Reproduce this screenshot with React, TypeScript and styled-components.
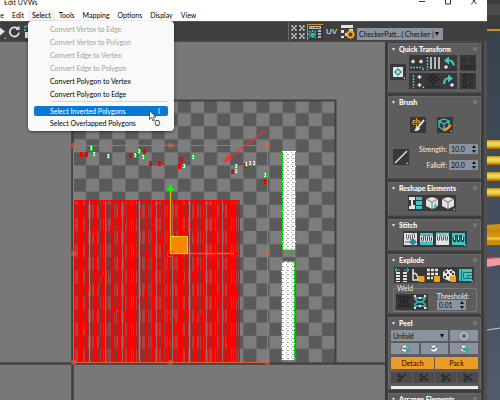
import React from "react";
import styled, { createGlobalStyle, css } from "styled-components";

const Global = createGlobalStyle`
  * { box-sizing: border-box; }
  html, body { margin: 0; overflow: hidden; background: #3f4753; }
  body { font-family: Lato, "Open Sans", sans-serif; font-size: 7px; line-height: 10px; color: #f0f0f0; }
  button, input, select { font: inherit; color: inherit; margin: 0; padding: 0; border: 0; border-radius: 0; }
  svg { display: block; }
`;

const Screen = styled.div`
  display: grid;
  grid-template-columns: minmax(0, 1fr) 13px;
  height: 100vh;
  overflow: hidden;
`;
const Window = styled.div`
  position: relative;
  display: flex;
  flex-direction: column;
  min-width: 0;
  min-height: 0;
  background: #444;
`;
const TitleBar = styled.header`
  display: flex;
  justify-content: space-between;
  height: 10px;
  flex: none;
  padding-left: 4px;
  background: #fff;
  color: #111;
  line-height: 4px;
`;
const WindowButtons = styled.div`
  display: flex;
  gap: 6px;
  padding-right: 3px;
`;
const WindowButton = styled.button`
  width: 20px;
  height: 6px;
  background: none;
  display: grid;
  justify-content: center;
`;
const MenuBar = styled.nav`
  display: flex;
  height: 11px;
  flex: none;
  background: #fff;
  overflow: hidden;
`;
const MenuTitles = styled.div`
  display: flex;
  margin-left: -11px;
`;
const MenuTitle = styled.button<{ $open?: boolean }>`
  padding: 0 4px;
  height: 11px;
  line-height: 11px;
  color: #000;
  background: ${(p) => (p.$open ? "#f1f1f1" : "transparent")};
`;
const Toolbar = styled.div`
  display: flex;
  align-items: center;
  justify-content: space-between;
  height: 21px;
  flex: none;
  background: #3f3f3f;
  border-top: 1px solid #555;
  border-bottom: 1px solid #4c4c4c;
`;
const Tools = styled.div`
  display: flex;
  align-items: center;
`;
const LeftTools = styled(Tools)`
  margin-left: -9px;
`;
const RightTools = styled(Tools)`
  height: 19px;
  padding: 0 44px 0 1px;
  gap: 1px;
  border-left: 1px solid #666;
`;
const IconButton = styled.button<{ $plain?: boolean; $active?: boolean }>`
  width: 16px;
  height: 16px;
  flex: none;
  background: ${(p) => (p.$plain ? "transparent" : "#383838")};
  ${(p) => p.$active && css`box-shadow: inset 1px 1px #e08a1c;`}
`;
const TextTool = styled.button`
  width: 15px;
  background: none;
  color: #eee;
  font-family: "Liberation Sans", sans-serif;
  font-size: 8px;
`;
const Picker = styled.div<{ $top?: boolean }>`
  position: relative;
  color: #0c1016;
  background: #8a93a0;
  height: ${(p) => (p.$top ? "12px" : "11px")};
  width: ${(p) => (p.$top ? "86px" : "auto")};
  margin-top: ${(p) => (p.$top ? "4px" : "0")};
  select {
    appearance: none;
    display: block;
    width: 100%;
    height: 100%;
    padding: 0 0 0 2px;
    background: transparent;
  }
  svg {
    position: absolute;
    right: 4px;
    top: 4px;
    pointer-events: none;
  }
`;
const Body = styled.div`
  flex: 1;
  min-height: 0;
  display: grid;
  grid-template-columns: minmax(0, 1fr) 102px;
`;
const Viewport = styled.main`
  min-width: 0;
  min-height: 0;
  overflow: hidden;
  background: #787878;
`;
const Side = styled.aside`
  display: flex;
  flex-direction: column;
  gap: 3px;
  min-height: 0;
  overflow: hidden;
  padding: 1px 3px 0 2px;
  background: #3e3e3e;
  border-left: 1px solid #363636;
  border-right: 3px solid #505050;
`;
const Rollout = styled.section`
  flex: none;
  background: #5d5d5d;
  border: 1px solid #696969;
  border-bottom-color: #505050;
`;
const RolloutTitle = styled.h2`
  display: flex;
  align-items: center;
  height: 10px;
  margin: 0;
  padding: 0 3px;
  gap: 4px;
  font-size: 7px;
  line-height: 10px;
  font-weight: 900;
  white-space: nowrap;
  color: #fff;
  &::after {
    content: "";
    width: 4px;
    height: 4px;
    margin-left: auto;
    background: #747474;
  }
`;
const Row = styled.div<{ $gap?: number; $pad?: string; $center?: boolean }>`
  display: flex;
  align-items: center;
  justify-content: ${(p) => (p.$center ? "center" : "flex-start")};
  gap: ${(p) => p.$gap ?? 0}px;
  padding: ${(p) => p.$pad ?? "0"};
`;
const TransformGrid = styled.div`
  display: grid;
  grid-template-columns: repeat(3, 16px);
  gap: 2px 0;
`;
const Stack = styled.div`
  display: grid;
  gap: 2px;
`;
const Fields = styled.div`
  display: grid;
  gap: 6px;
  margin-left: auto;
`;
const Field = styled.label`
  display: flex;
  align-items: center;
  justify-content: flex-end;
  gap: 2px;
  white-space: nowrap;
`;
const Spinner = styled.span`
  display: flex;
  align-items: center;
  width: 29px;
  height: 10px;
  padding: 0 2px;
  background: #8a93a0;
  color: #0c1016;
  input {
    width: 21px;
    height: 10px;
    background: transparent;
    outline: 0;
  }
`;
const Weld = styled.fieldset`
  display: flex;
  justify-content: space-between;
  min-width: 0;
  height: 28px;
  margin: 0 3px 1px 4px;
  padding: 0 7px 0 2px;
  border: 1px solid #777;
  legend {
    padding: 0 1px;
    height: 8px;
    line-height: 8px;
  }
`;
const Threshold = styled.label`
  display: grid;
  align-content: start;
  line-height: 8px;
`;
const PeelGrid = styled.div`
  display: grid;
  grid-template-columns: repeat(3, 1fr);
  gap: 2px;
  padding: 2px 2px 3px;
  ${Picker} { grid-column: span 2; }
`;
const PeelButton = styled.button`
  display: grid;
  place-items: center;
  height: 11px;
  background: #8a93a0;
`;
const Split = styled.div<{ $cols: number }>`
  display: grid;
  grid-template-columns: repeat(${(p) => p.$cols}, 1fr);
  gap: 1px;
  padding: 0 2px 3px;
`;
const Action = styled.button`
  height: 12px;
  background: #ed9b22;
  color: #100c04;
`;
const Disabled = styled.button`
  display: grid;
  place-items: center;
  height: 11px;
  background: #4b4b4b;
`;
const Progress = styled.div`
  height: 3px;
  margin: 0 2px;
  background: #eee;
`;
const Popup = styled.div`
  position: absolute;
  left: 28px;
  top: 21px;
  width: 146px;
  padding: 1px 6px 2px;
  border-radius: 4px;
  background: #f9f9f9;
  box-shadow: 0 1px 3px #0008;
`;
const MenuItem = styled.button<{ $hot?: boolean }>`
  display: flex;
  justify-content: space-between;
  align-items: center;
  width: 100%;
  height: ${(p) => (p.$hot ? "10px" : "13px")};
  padding: 0 8px 0 16px;
  border-radius: 2px;
  text-align: left;
  white-space: nowrap;
  background: ${(p) => (p.$hot ? "#0a78d4" : "transparent")};
  color: ${(p) => (p.$hot ? "#fff" : "#000")};
  &:disabled { color: #a0a0a0; }
`;
const Divider = styled.hr`
  height: 1px;
  margin: 1px 0 4px 17px;
  border: 0;
  background: #d8d8d8;
`;
const Pointer = styled.svg`
  position: absolute;
  left: 149px;
  top: 110px;
`;

const W = "#e4e4e4";
const T = "#3fc5c5";
const O = "#efa31f";
const D = "#252525";

const Svg = ({ children, corner }: { children: React.ReactNode; corner?: boolean }) => (
  <svg width="16" height="16" viewBox="0 0 16 16" fill="none">
    {children}
    {corner && <path d="M15 13v2h-2z" fill="#bbb" />}
  </svg>
);
const Arrow = () => (
  <svg width="4" height="4" viewBox="0 0 4 4"><path d="M0 0h4L2 4z" fill="#111" /></svg>
);
const Chevron = () => (
  <svg width="3" height="3" viewBox="0 0 3 3"><path d="M0 0h3L1.5 3z" fill="#ddd" /></svg>
);

const icons: Record<string, React.ReactNode> = {
  Move: <><path d="M4 7.500h6" stroke={W} strokeWidth="1.600" /><path d="M9 3.500l5 4-5 4z" fill={W} /><path d="M15 13v2h-2z" fill="#bbb" /></>,
  Rotate: <><path d="M10.500 4.500A4.600 4.600 0 1 0 12 8.500" stroke={W} strokeWidth="1.7" /><path d="M8.500 6h4V1.500z" fill={W} /></>,
  Scale: <><path d="M2 7V2h10v10" stroke={T} strokeWidth="1.500" strokeDasharray="2 1" /><path d="M2 8h6v6H2z" fill={W} /></>,
  "Checker pattern": <path d="M1.500 1.500l5 5m0-5l-5 5M9.500 1.500l5 5m0-5l-5 5M1.500 9.500l5 5m0-5l-5 5M9.500 9.500l5 5m0-5l-5 5" stroke={W} strokeWidth="1.600" strokeDasharray="1.8 .8" />,
  "Show map": <><path d="M2 2h12v3H2zM11 6h3v2h-3zm0 3h3v2h-3zm0 3h3v2h-3z" fill="#b8b8b8" /><path d="M3 3.500h1m1 0h1m1 0h6" stroke="#555" /><path d="M2 7l7 7m0-7l-7 7M5.500 6v9M1 10.500h9" stroke={T} strokeWidth="1.5" strokeDasharray="2 1" /></>,
  "Map options": <><path d="M1 1h12v3H1zM1 6h3v3H1zm4 3h3v3H5zM1 12h3v2H1zm8-7h4v2H9z" fill={W} /><circle cx="10.5" cy="10.5" r="3" stroke={O} strokeWidth="2" /><path d="M10.500 6v2m0 5v2M6 10.500h2m5 0h2" stroke={O} /></>,
  Pivot: <><path d="M3 3h10v10H3z" fill={W} /><path d="M8 4l4 4-4 4-4-4z" fill="#1d8f92" /><path d="M8 6v4M6 8h4" stroke="#fff" /></>,
  "Align horizontal": <><path d="M4 4.500v4M2 6.500h4M12 4.500v4m-2-2h4" stroke={W} strokeWidth="1.3" /><path d="M1 12.500h13" stroke={T} strokeDasharray="2 1" strokeWidth="1.300" /></>,
  "Space lines": <><path d="M2.500 2v13" stroke={T} strokeWidth="1.600" strokeDasharray="2 1" /><path d="M6 2v12m4-12v12m4-12v12" stroke={W} strokeWidth="1.5" /></>,
  "Rotate left": <><path d="M6 5.500c4-1 6 1 7 5" stroke={T} strokeWidth="2.2" /><path d="M8 1.500v8l-5-4z" fill={T} /><path d="M5 10v4M3 12h4" stroke={W} strokeWidth="1.3" /></>,
  "Align vertical": <><path d="M4.500 2v13" stroke={T} strokeDasharray="2 1" strokeWidth="1.5" /><path d="M10.500 2v4m-2-2h4M10.500 10v4m-2-2h4" stroke={W} strokeWidth="1.3" /></>,
  Relax: <><path d="M8 1l5 5-5 5-5-5zM5.500 3.500l5 5m0-5l-5 5" stroke={D} strokeWidth="1.3" /><path d="M1 13.500h14" stroke={D} strokeWidth="2" strokeDasharray="2 1" /></>,
  "Rotate right": <><path d="M3 11c0-4 2-6 6-6" stroke={T} strokeWidth="2.2" /><path d="M7 1.500v8l5-4z" fill={T} /><path d="M11 10v4m-2-2h4" stroke={W} strokeWidth="1.3" /></>,
  "Distribute row": <g stroke={D}><circle cx="4" cy="5" r="2" /><circle cx="12" cy="5" r="2" /><path d="M1.500 10.500h3v3h-3zm5 0h3v3h-3zm5 0h3v3h-3z" /></g>,
  "Distribute column": <g stroke={D}><circle cx="11" cy="4" r="2" /><circle cx="11" cy="12" r="2" /><path d="M3.500 1.500h3v3h-3zm0 5h3v3h-3zm0 5h3v3h-3z" /></g>,
  Paint: <><path d="M2 5.500h8M6.500 1v9M3.500 3.500h6v4h-6z" stroke={O} strokeWidth="1.2" strokeDasharray="2 1" /><path d="M14 3L8.500 10" stroke={W} strokeWidth="2" /><path d="M7 9l3 2c-1 3-3 3-6 3 2-1 1-4 3-5z" fill={W} /></>,
  "Relax brush": <><path d="M7 2l5 2v6l-5 3-5-3V4zM2 4l5 3 5-3M7 7v6" stroke={T} strokeWidth="1.3" /><path d="M14 8l-4 4" stroke={O} strokeWidth="2.200" /><path d="M9 10l2 2c-1 2-3 2-5 2z" fill={O} /></>,
  Falloff: <path d="M2 14L14 2" stroke={W} strokeWidth="1.4" />,
  Straighten: <><path d="M1 2h6v3H5v5h2v4H1v-3h2V5H1z" fill={W} /><path d="M8 2h6v3H8zm0 4h6v4H8zm0 5h6v3H8z" fill={T} /></>,
  "Relax mesh": <><path d="M8 2l6 2v7l-6 3-6-3V4z" fill={W} /><path d="M2 4l6 3 6-3M8 7v7" stroke="#777" /><path d="M12 7l-3 5h2l-1 3 4-5h-2z" fill={T} /></>,
  "Relax custom": <><path d="M8 2l6 2v7l-6 3-6-3V4z" fill={W} /><path d="M2 4l6 3 6-3M8 7v7" stroke="#777" /></>,
  "Stitch custom": <><path d="M1 2h13v12H1z" fill={W} /><path d="M3.500 3v4c0 2 2 2 2 0V5c0-2 2-2 2 0v3c0 2 2 1 2 0V4c0-2 2-2 2 0v3M2 11h6" stroke="#555" strokeWidth=".9" /><path d="M10 7l4 4-4 4-4-4z" fill="#268e91" /></>,
  "Stitch source": <><path d="M1 2h13v12H1z" fill={W} /><path d="M1 2h13v3H1zM1 11h13v3H1z" fill={T} /><path d="M2.500 6v3c0 2 2 2 2 0V6c0-2 2-2 2 0v3c0 2 2 2 2 0V6c0-2 2-2 2 0v3c0 2 2 2 2 0V6" stroke="#444" /></>,
  "Stitch average": <><path d="M1 2h13v12H1z" fill={W} /><path d="M1 3h13" stroke={T} strokeWidth="3" strokeDasharray="2 1" /><path d="M2.500 5v3c0 2 2 2 2 0V6c0-2 2-2 2 0v2c0 2 2 2 2 0V6c0-2 2-2 2 0v2c0 2 2 2 2 0V5" stroke="#555" /></>,
  "Stitch target": <><path d="M1 2h13v12H1z" fill={T} /><path d="M2.500 6v3c0 2 2 2 2 0V6c0-2 2-2 2 0v3c0 2 2 2 2 0V6c0-2 2-2 2 0v3c0 2 2 2 2 0V6" stroke="#1d4648" strokeWidth="1.600" /><path d="M3.500 6v3m4-3v3m4-3v3" stroke={W} /></>,
  Break: <><path d="M4 5v10m7-10v10" stroke={W} strokeWidth="4" strokeDasharray="2 1" /><path d="M1 3h5m9 0h-5M3 1L1 3l2 2m10-4l2 2-2 2" stroke={T} /></>,
  "Flatten angle": <><path d="M3 2v11h6M3 6c4 0 5 3 5 7" stroke={W} strokeWidth="1.5" /><path d="M8.500 9h6v6h-6z" fill={O} /></>,
  "Flatten groups": <><path d="M1 3h12M1 7h12M1 11h6" stroke={W} strokeWidth="2.600" strokeDasharray="3 1" /><path d="M8 9h6v6H8z" fill={O} /></>,
  "Flatten material": <><path d="M7 1l6 4v6l-6 3-6-3V5z" fill={W} /><path d="M3 5h2m3 0h2M5 8h2M2 10h2M6 2h2m2 5h2" stroke="#333" strokeWidth="2" /><path d="M8 9h6v6H8z" fill={O} /></>,
  "Flatten custom": <><path d="M1 2h13v12H1z" fill={T} /><path d="M14 5.500H5.500v6H14M9.500 11V8.500H14M3.500 3v11" stroke="#276b6d" /></>,
  "Weld target": <path d="M2 2l4 5-4 6m12-11l-4 5 4 6M4 3h8M4 12h8M8 3v10M5 7h6" stroke={D} strokeWidth="1.6" />,
  "Weld selected": <><path d="M3 2v3l3 3-3 2v4m10-12v3l-3 3 3 2v4M4 4h8M4 12h8M6 8h4" stroke={T} strokeWidth="1.4" /><path d="M2 1h2v2H2zm10 0h2v2h-2zM2 13h2v2H2zm10 0h2v2h-2zM7 3h2v2H7zm0 8h2v2H7z" fill={W} /></>,
};
const corners = ["Pivot", "Align horizontal", "Align vertical", "Relax brush", "Falloff", "Relax custom", "Stitch target", "Flatten custom", "Weld selected"];

const Tool = ({ name, plain, active, off }: { name: string; plain?: boolean; active?: boolean; off?: boolean }) => (
  <IconButton aria-label={name} $plain={plain} $active={active} disabled={off}>
    <Svg corner={corners.includes(name)}>{icons[name]}</Svg>
  </IconButton>
);

const SpinInput = ({ value }: { value: string }) => (
  <Spinner>
    <input defaultValue={value} />
    <svg width="4" height="8" viewBox="0 0 4 8"><path d="M0 3h4L2 0zm0 2h4L2 8z" fill="#111" /></svg>
  </Spinner>
);

const Panel = ({ title, children }: { title: string; children?: React.ReactNode }) => (
  <Rollout>
    <RolloutTitle><Chevron />{title}</RolloutTitle>
    {children}
  </Rollout>
);

const stripeOffsets = [
  [0, 1], [3, 3], [8, 1], [10, 2], [13, 1],
];
const stripes = Array.from({ length: 10 }, (_, c) =>
  stripeOffsets.map(([d, w], i) => ({
    x: Math.round(74 + c * 16.7) + d + (i === 1 || i === 3 ? (c + i) % 2 : 0),
    w: w + (i === 1 ? (c % 3 === 0 ? 1 : 0) : 0),
  })),
).flat();
const dashes = Array.from({ length: 130 }, (_, i) => ({
  x: 75 + ((i * 37) % 163),
  y: 204 + ((i * 71) % 138),
  h: 7 + ((i * 13) % 13),
}));
const redBits = [[80, 152], [85, 152], [129, 153], [143, 149], [149, 161], [158, 161], [180, 157], [178, 164], [231, 169], [244, 163], [264, 179]];
const mixedBits = [[90, 146], [93, 152], [107, 154], [134, 153], [138, 149], [142, 155], [183, 164], [192, 155], [235, 164], [235, 169], [245, 162], [249, 161], [253, 161], [264, 173]];

const Unwrap = () => (
  <svg width="100%" height="100%" role="img" aria-label="UV layout">
    <defs>
      <pattern id="checker" x="73" y="100" width="26.2" height="26.2" patternUnits="userSpaceOnUse">
        <path d="M0 0h26.200v26.200H0z" fill="#7d7d7d" />
        <path d="M0 0h13.100v13.100H0zM13.100 13.100h13.100v13.100H13.100z" fill="#5a5a5a" />
      </pattern>
      <pattern id="mesh" width="5" height="4" patternUnits="userSpaceOnUse">
        <path d="M0 0h5v4H0z" fill="#fff" />
        <path d="M1 0h1v1H1zM3 2h1v1H3z" fill="#aaa" />
        <path d="M2 2h.6v1H2z" fill="#555" />
      </pattern>
    </defs>
    <g transform="translate(0 -42)" fill="none">
      <path d="M73 100h262v262H73z" fill="url(#checker)" />
      <path d="M0 363.500h1000M72.500 100v900" stroke="#424242" strokeWidth="2.600" />
      <path d="M72 100.500h263.500V363" stroke="#424242" strokeWidth="2" />
      <path d="M74 200h166v162H74z" fill="#d00000" fillOpacity=".42" />
      {stripes.map((s, i) => <rect key={i} x={s.x} y="200" width={s.w} height="162" fill="#f00" />)}
      {dashes.map((s, i) => <rect key={i} x={s.x} y={s.y} width="1" height={s.h} fill="#f00" />)}
      {Array.from({ length: 9 }, (_, i) => <rect key={i} x={Math.round(74 + (i + 1) * 16.7) - 2} y="201" width="1" height="161" fill={i % 3 ? "#8a7272" : "#7d9292"} />)}
      <path d="M74 200.500h165.500V362" stroke="#f00" />
      {redBits.map(([x, y], i) => <rect key={i} x={x} y={y} width="3" height="5" fill="#f00000" />)}
      {mixedBits.map(([x, y], i) => (
        <g key={i}>
          <rect x={x} y={y} width="2" height="4" fill="#f4e4e4" />
          <path d={`M${x + 2.500} ${y}v4.500h-2`} stroke="#00dc20" />
          <path d={`M${x + 0.500} ${y + 1}v2`} stroke="#5a5" />
        </g>
      ))}
      <path d="M282 151h14v99h-14zM281 261h14v99h-14z" fill="url(#mesh)" />
      <path d="M282.500 152v98h13v-98M281.500 361v-99.500h13V360" stroke="#0d0" strokeDasharray="14 1" />
      <path d="M73.500 145.500h194v217h-194z" stroke="#e0603a" />
      <path d="M170 253.500h69" stroke="#ff5030" strokeWidth="1.600" />
      <path d="M234 251l6 2.500-6 2.500z" fill="#f00" />
      <path d="M170.500 253v-66" stroke="#d8b000" strokeWidth="1.300" />
      <path d="M167 191l3.500-7 3.500 7z" fill="#0f0" />
      <path d="M170.500 236.500h17v17h-17z" fill="#f89000" fillOpacity=".92" stroke="#ffe000" />
      {[[73, 145], [170, 145], [267, 145], [73, 253], [267, 253], [73, 362], [170, 362], [267, 362]].map(([x, y], i) => (
        <rect key={i} x={x - 1} y={y - 1} width="3" height="3" stroke="#e8603a" />
      ))}
      <path d="M167.500 251.500h5v5h-5z" stroke="#ff4020" />
      <path d="M266 130l-36 27" stroke="#f23030" strokeWidth="1.500" />
      <path d="M223 163l5-8.500 4 5z" fill="#f23030" />
    </g>
  </svg>
);

const Scene = () => (
  <svg width="13" height="100%" aria-hidden="true">
    <defs>
      <linearGradient id="gold" x2="0" y2="1">
        <stop offset="0" stopColor="#c08a10" /><stop offset=".3" stopColor="#f0d860" />
        <stop offset=".6" stopColor="#f0d040" /><stop offset=".8" stopColor="#d89a10" /><stop offset="1" stopColor="#8a6410" />
      </linearGradient>
      <linearGradient id="bundle" x2="0" y2="1">
        <stop offset="0" stopColor="#d89a18" /><stop offset=".3" stopColor="#c88808" />
        <stop offset=".6" stopColor="#d89810" /><stop offset=".7" stopColor="#f0d050" /><stop offset=".8" stopColor="#c88808" /><stop offset="1" stopColor="#d09010" />
      </linearGradient>
      <linearGradient id="sky" x2="0" y2="1">
        <stop offset="0" stopColor="#363f4c" /><stop offset="1" stopColor="#515b6a" />
      </linearGradient>
    </defs>
    <rect width="13" height="100%" fill="url(#sky)" />
    <path d="M0 0h13v29H0z" fill="#3c3c3c" />
    <path d="M0 4h13v11H0z" fill="#4b4b4b" />
    <path d="M0 29h13v2H0z" fill="#c99216" />
    {[140, 156, 172, 188].map((y) => <rect key={y} y={y} width="13" height="9" fill="url(#gold)" />)}
    <path d="M0 225l13-1v21H0z" fill="url(#bundle)" />
    <path d="M0 258l13-1v8l-13 2z" fill="#f09aa0" />
    <path d="M0 258.500l13-1" stroke="#d03038" />
    <path d="M0 330l13-2" stroke="#c4c8cc" />
  </svg>
);

const Dial = ({ mark }: { mark?: string }) => (
  <svg width="10" height="9" viewBox="0 0 10 9" fill="none">
    <circle cx="5" cy="4.500" r="3.800" fill="#e8e8e8" stroke="#666" strokeWidth=".7" />
    <path d="M1.500 3.500L5 5l2.500-3" stroke="#444" />
    {mark && <path d={mark} fill="#36a5a5" />}
  </svg>
);

const disabledItems = ["Convert Vertex to Edge", "Convert Vertex to Polygon", "Convert Edge to Vertex", "Convert Edge to Polygon"];

export default function App() {
  return (
    <Screen>
      <Global />
      <Window>
        <TitleBar>
          <span>Edit UVWs</span>
          <WindowButtons>
            <WindowButton aria-label="Minimize"><svg width="6" height="5"><path d="M0 1.500h6" stroke="#333" /></svg></WindowButton>
            <WindowButton aria-label="Maximize"><svg width="6" height="5"><path d="M.5 0v4h5V0" fill="none" stroke="#333" /></svg></WindowButton>
            <WindowButton aria-label="Close"><svg width="6" height="5"><path d="M0 4.500L5-1M6 4.500L1-1" stroke="#333" /></svg></WindowButton>
          </WindowButtons>
        </TitleBar>
        <MenuBar>
          <MenuTitles>
            {["File", "Edit", "Select", "Tools", "Mapping", "Options", "Display", "View"].map((m) => (
              <MenuTitle key={m} $open={m === "Select"}>{m}</MenuTitle>
            ))}
          </MenuTitles>
        </MenuBar>
        <Toolbar>
          <LeftTools>
            <Tool name="Move" plain />
            <Tool name="Rotate" plain />
            <Tool name="Scale" plain />
          </LeftTools>
          <RightTools>
            <Tool name="Checker pattern" plain />
            <Tool name="Show map" active />
            <TextTool>UV</TextTool>
            <Tool name="Map options" plain />
            <Picker $top>
              <select aria-label="Map"><option>CheckerPatt...( Checker )</option></select>
              <Arrow />
            </Picker>
          </RightTools>
        </Toolbar>
        <Body>
          <Viewport><Unwrap /></Viewport>
          <Side>
            <Panel title="Quick Transform">
              <Row $pad="1px 0 3px 1px" $gap={3}>
                <Tool name="Pivot" />
                <TransformGrid>
                  {["Align horizontal", "Space lines", "Rotate left", "Align vertical", "Relax", "Rotate right"].map((n) => <Tool key={n} name={n} />)}
                </TransformGrid>
                <Stack><Tool name="Distribute row" off /><Tool name="Distribute column" off /></Stack>
              </Row>
            </Panel>
            <Panel title="Brush">
              <Row $gap={11} $pad="10px 6px 0 0" $center><Tool name="Paint" /><Tool name="Relax brush" /></Row>
              <Row $pad="11px 2px 8px 4px">
                <Tool name="Falloff" />
                <Fields>
                  <Field>Strength:<SpinInput value="10.0" /></Field>
                  <Field>Falloff:<SpinInput value="20.0" /></Field>
                </Fields>
              </Row>
            </Panel>
            <Panel title="Reshape Elements">
              <Row $pad="2px 6px 4px 0" $center>{["Straighten", "Relax mesh", "Relax custom"].map((n) => <Tool key={n} name={n} />)}</Row>
            </Panel>
            <Panel title="Stitch">
              <Row $pad="1px 0 3px" $center>{["Stitch custom", "Stitch source", "Stitch average", "Stitch target"].map((n) => <Tool key={n} name={n} />)}</Row>
            </Panel>
            <Panel title="Explode">
              <Row $pad="2px 2px 1px 0" $center>{["Break", "Flatten angle", "Flatten groups", "Flatten material", "Flatten custom"].map((n) => <Tool key={n} name={n} />)}</Row>
              <Weld>
                <legend>Weld</legend>
                <Row><Tool name="Weld target" off /><Tool name="Weld selected" /></Row>
                <Threshold>Threshold:<SpinInput value="0.01" /></Threshold>
              </Weld>
            </Panel>
            <Panel title="Peel">
              <PeelGrid>
                <Picker><select aria-label="Peel mode"><option>Unfold</option></select><Arrow /></Picker>
                <PeelButton aria-label="Settings"><svg width="8" height="8" viewBox="0 0 8 8" fill="none" stroke="#444"><circle cx="4" cy="4" r="3.200" stroke="#ddd" /><circle cx="4" cy="4" r="1.500" /></svg></PeelButton>
                <PeelButton aria-label="Quick peel"><Dial mark="M6 4h4v4H6z" /></PeelButton>
                <PeelButton aria-label="Peel mode toggle"><Dial /></PeelButton>
                <PeelButton aria-label="Reset peel"><Dial mark="M4 4h6v3H4z" /></PeelButton>
              </PeelGrid>
              <Split $cols={2}><Action>Detach</Action><Action>Pack</Action></Split>
              <Split $cols={4}>
                {["Edit seams", "Point to point", "Expand seams", "Convert seams"].map((n, i) => (
                  <Disabled key={n} aria-label={n} disabled>
                    <svg width="10" height="9" viewBox="0 0 10 9" fill="none" stroke="#292929" strokeWidth="1.2"><circle cx="2" cy="2.500" r="1.200" /><circle cx="2.500" cy="7" r="1.200" /><path d="M3 6l6-5M3 3l2 1" />{i > 0 && <path d="M5 5l4 3M8 5v3" />}</svg>
                  </Disabled>
                ))}
              </Split>
              <Progress />
            </Panel>
            <Panel title="Arrange Elements" />
          </Side>
        </Body>
        <Popup role="menu">
          {disabledItems.map((t) => <MenuItem key={t} role="menuitem" disabled>{t}</MenuItem>)}
          <MenuItem role="menuitem">Convert Polygon to Vertex</MenuItem>
          <MenuItem role="menuitem">Convert Polygon to Edge</MenuItem>
          <Divider />
          <MenuItem role="menuitem" $hot><span>Select Inverted Polygons</span><span>I</span></MenuItem>
          <MenuItem role="menuitem"><span>Select Overlapped Polygons</span><span>O</span></MenuItem>
        </Popup>
        <Pointer width="8" height="12" viewBox="0 0 8 12"><path d="M.5.500v9l2-2 1.500 3.500 1.500-.7L4 7h3z" fill="#fff" stroke="#222" strokeWidth=".7" /></Pointer>
      </Window>
      <Scene />
    </Screen>
  );
}
